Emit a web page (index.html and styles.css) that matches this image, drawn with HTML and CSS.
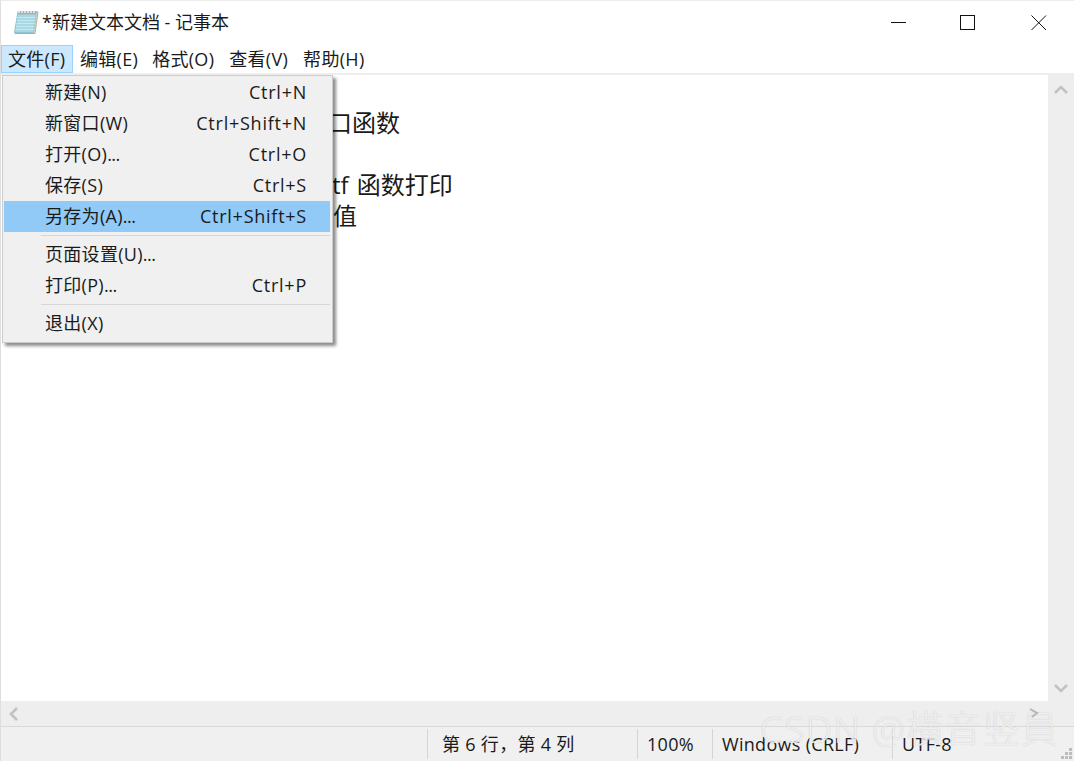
FILE: index.html
```html
<!DOCTYPE html>
<html lang="zh-CN">
<head>
<meta charset="utf-8">
<title>新建文本文档 - 记事本</title>
<link rel="stylesheet" href="styles.css">
</head>
<body>
<div class="window">
  <header class="titlebar">
    <svg class="app-icon" width="26" height="28" viewBox="0 0 26 28">
      <path d="M6 4H25L22 25.5H2Z" fill="#e9e4d2" stroke="#b9ab86" stroke-width="1"/>
      <path d="M5 3.5H23.5L20.5 24.5H1.5Z" fill="#a8d8e4" stroke="#90c4d2" stroke-width="1"/>
      <path d="M5 3H23.5L23 6.5H4.5Z" fill="#a3b1b6"/>
      <path d="M4.2 9.5H22.5M3.8 12.5H22M3.4 15.5H21.6M3 18.5H21.2M2.6 21.5H20.8" stroke="#c8e8ef" stroke-width="1"/>
      <path d="M6 2.5V5M9 2.5V5M12 2.5V5M15 2.5V5M18 2.5V5M21 2.5V5" stroke="#f1f5f6" stroke-width="1.4"/>
    </svg>
    <span class="title">*新建文本文档 - 记事本</span>
    <div class="win-controls">
      <svg class="win-btn" width="16" height="16" viewBox="0 0 16 16"><path d="M1 7.5H16" stroke="#111" stroke-width="1"/></svg>
      <svg class="win-btn" width="17" height="16" viewBox="0 0 17 16"><rect x="0.5" y="0.5" width="14" height="14" fill="none" stroke="#111" stroke-width="1"/></svg>
      <svg class="win-btn" width="16" height="16" viewBox="0 0 16 16"><path d="M0.5 0.5L15 15M15 0.5L0.5 15" stroke="#111" stroke-width="1"/></svg>
    </div>
  </header>

  <nav class="menubar">
    <span class="menu-item is-open">文件(F)</span>
    <span class="menu-item">编辑(E)</span>
    <span class="menu-item">格式(O)</span>
    <span class="menu-item menu-view">查看(V)</span>
    <span class="menu-item">帮助(H)</span>
  </nav>

  <div class="workspace">
    <main class="editor">
      <p class="line line-main">口函数</p>
      <p class="line line-blank">&nbsp;</p>
      <p class="line line-print">tf 函数打印</p>
      <p class="line line-value">值</p>
    </main>
    <aside class="vscroll">
      <svg width="14" height="10" viewBox="0 0 14 10"><path d="M1 8L7 2L13 8" fill="none" stroke="#c2c2c2" stroke-width="2.6"/></svg>
      <svg width="14" height="10" viewBox="0 0 14 10"><path d="M1 2L7 8L13 2" fill="none" stroke="#c2c2c2" stroke-width="2.6"/></svg>
    </aside>
  </div>

  <div class="hscroll">
    <svg width="10" height="14" viewBox="0 0 10 14"><path d="M8 1L2 7L8 13" fill="none" stroke="#c2c2c2" stroke-width="2.6"/></svg>
  </div>

  <footer class="statusbar">
    <span class="cell cell-pos">第 6 行，第 4 列</span>
    <span class="cell cell-zoom">100%</span>
    <span class="cell cell-eol">Windows (CRLF)</span>
    <span class="cell cell-enc">UTF-8</span>
    <svg class="grip" width="11" height="11" viewBox="0 0 11 11">
      <path d="M8 0h3v3H8zM4 4h3v3H4zM8 4h3v3H8zM0 8h3v3H0zM4 8h3v3H4zM8 8h3v3H8z" fill="#bdbdbd"/>
    </svg>
  </footer>

  <div class="dropdown">
    <div class="row"><span>新建(N)</span><span class="keys">Ctrl+N</span></div>
    <div class="row"><span>新窗口(W)</span><span class="keys">Ctrl+Shift+N</span></div>
    <div class="row"><span>打开(O)<span class="dots">...</span></span><span class="keys">Ctrl+O</span></div>
    <div class="row"><span>保存(S)</span><span class="keys">Ctrl+S</span></div>
    <div class="row is-active"><span>另存为(A)<span class="dots">...</span></span><span class="keys">Ctrl+Shift+S</span></div>
    <div class="sep"></div>
    <div class="row"><span>页面设置(U)<span class="dots">...</span></span></div>
    <div class="row"><span>打印(P)<span class="dots">...</span></span><span class="keys">Ctrl+P</span></div>
    <div class="sep"></div>
    <div class="row"><span>退出(X)</span></div>
  </div>

  <div class="watermark">CSDN @橫音竖員</div>
  <svg class="wm-mark" width="10" height="10" viewBox="0 0 10 10"><path d="M1 1L8 5L3 9" fill="none" stroke="#b5b5b5" stroke-width="2"/></svg>
</div>
</body>
</html>
```
FILE: styles.css
```css
* { box-sizing: border-box; }
html, body { margin: 0; height: 100%; overflow: hidden; }
body {
  font-family: "Open Sans", "Noto Sans CJK SC", sans-serif;
  font-size: 18px;
  color: #1a1a1a;
  background: #fff;
}
.window {
  position: relative;
  width: 1074px;
  height: 761px;
  display: flex;
  flex-direction: column;
  border-left: 1px solid #dedede;
  border-top: 1px solid #ececec;
}
.titlebar {
  height: 44px;
  display: flex;
  align-items: center;
  padding-left: 12px;
  flex: none;
}
.app-icon { flex: none; margin-top: -2px; }
.title { margin-left: 3px; margin-top: -2px; line-height: 24px; }
.win-controls {
  margin-left: auto;
  display: flex;
  align-items: center;
  gap: 54px;
  padding-right: 27px;
}
.menubar {
  height: 30px;
  flex: none;
  display: flex;
  align-items: stretch;
  border-bottom: 2px solid #eeeeee;
  letter-spacing: 0.3px;
}
.menu-item {
  display: flex;
  align-items: center;
  padding: 0 7px;
  height: 28px;
  line-height: 24px;
  white-space: pre;
}
.menu-view { padding: 0 8px; }
.menu-item.is-open {
  background: #cce8ff;
  border: 1px solid #99d1ff;
  padding: 0 6px;
  width: 72px;
}
.workspace {
  flex: 1;
  display: flex;
  min-height: 0;
}
.editor {
  flex: 1;
  padding-top: 32px;
  font-size: 24px;
}
.line {
  margin: 0;
  height: 31px;
  line-height: 31px;
  white-space: pre;
}
.line-main { padding-left: 327px; }
.line-print { padding-left: 331px; word-spacing: 2px; }
.line-value { padding-left: 332px; }
.vscroll {
  width: 26px;
  flex: none;
  background: #eeeeee;
  display: flex;
  flex-direction: column;
  align-items: center;
  justify-content: space-between;
  padding: 10px 0 8px;
}
.hscroll {
  height: 25px;
  flex: none;
  background: #eeeeee;
  display: flex;
  align-items: center;
  padding-left: 8px;
}
.statusbar {
  height: 35px;
  flex: none;
  position: relative;
  background: #f0f0f0;
  border-top: 1px solid #d9d9d9;
  display: flex;
  align-items: stretch;
  padding: 0 0 0 426px;
  letter-spacing: 0.3px;
}
.cell {
  display: flex;
  align-items: center;
  border-left: 1px solid #d4d4d4;
  margin: 2px 0;
  padding-left: 14px;
  line-height: 24px;
  white-space: pre;
}
.cell-pos { width: 210px; }
.cell-zoom { width: 75px; padding-left: 9px; }
.cell-eol { width: 180px; padding-left: 9px; }
.cell-enc { flex: 1; padding-left: 9px; }
.grip { position: absolute; right: 2px; bottom: 2px; }
.dropdown {
  position: absolute;
  left: 1px;
  top: 74px;
  width: 331px;
  height: 268px;
  background: #f0f0f0;
  border: 1px solid #cccccc;
  padding: 1px;
  box-shadow: 3px 3px 3px rgba(0, 0, 0, 0.45);
  letter-spacing: 0.3px;
}
.row {
  height: 31px;
  display: flex;
  align-items: center;
  justify-content: space-between;
  padding: 0 23px 2px 41px;
  margin-right: 1px;
  line-height: 24px;
  white-space: pre;
}
.keys { letter-spacing: 0.75px; }
.dots { letter-spacing: -0.5px; }
.row.is-active { background: #91c9f7; }
.sep {
  height: 1px;
  margin: 3px 1px 3px 37px;
  background: #d6d6d6;
}
.watermark {
  position: absolute;
  left: 759px;
  top: 706px;
  font-size: 37px;
  font-weight: 300;
  line-height: 44px;
  letter-spacing: 1.3px;
  color: rgba(255, 255, 255, 0.75);
  text-shadow: 0 0 1px rgba(140, 140, 140, 0.55);
  white-space: pre;
}
.wm-mark { position: absolute; left: 1028px; top: 707px; }
```
